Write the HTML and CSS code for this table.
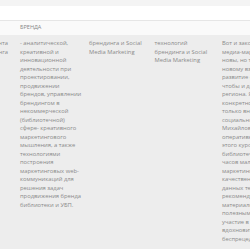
FILE: index.html
```html
<!DOCTYPE html>
<html lang="ru">
<head>
<meta charset="utf-8">
<link rel="stylesheet" href="styles.css">
</head>
<body>
<div class="page">
  <div class="prev-row"></div>
  <div class="head-top"></div>
  <table class="grid">
    <colgroup>
      <col class="c1"><col class="c2"><col class="c3"><col class="c4"><col class="c5">
    </colgroup>
    <thead>
      <tr>
        <th></th>
        <th>БРЕНДА</th>
        <th></th>
        <th></th>
        <th></th>
      </tr>
    </thead>
    <tbody>
      <tr>
        <td class="first">менеджмента<br>брендинга</td>
        <td>- аналитической,<br>креативной и<br>инновационной<br>деятельности при<br>проектировании,<br>продвижении<br>брендов, управлении<br>брендингом в<br>некоммерческой<br>(библиотечной)<br>сфере- креативного<br>маркетингового<br>мышления, а также<br>технологиями<br>построения<br>маркетинговых web-<br>коммуникаций для<br>решения задач<br>продвижения бренда<br>библиотеки и УБП.</td>
        <td>брендинга и Social<br>Media Marketing</td>
        <td>технологий<br>брендинга и Social<br>Media Marketing</td>
        <td>Вот и закончился курс<br>медиа-маркетинга. Многие темы<br>новы, но теперь я по-<br>новому взглянула на<br>развитие своей библиотеки,<br>чтобы и дальше быть центром<br>региона. Я получила<br>конкретное понимание, что не<br>только внешний вид, но и<br>социальные сети важны.<br>Михайловой Г.В. спасибо за<br>оперативность. Для меня<br>этого курса было достаточно:<br>библиотечному специалисту<br>часов мало, но теперь<br>маркетинг стал понятнее,<br>качественно, без лишних<br>данных техник. Всем<br>рекомендую! Все<br>материалы курса были<br>полезным и доступным.<br>участие в семинаре<br>вдохновит вас на<br>беспрецедентные</td>
      </tr>
    </tbody>
  </table>
</div>
</body>
</html>
```
FILE: styles.css
```css
html, body {
  margin: 0;
  padding: 0;
  background: #ffffff;
  overflow: hidden;
}
.page {
  width: 250px;
  height: 250px;
  overflow: hidden;
  font-family: "Open Sans", "Noto Sans", sans-serif;
  color: #8a8a8a;
}
.prev-row {
  height: 6px;
  background: #f4f4f4;
}
.head-top {
  height: 14px;
  background: #ffffff;
  border-bottom: 1px solid #e6e6e6;
}
.grid {
  border-collapse: collapse;
  table-layout: fixed;
  width: 374px;
  margin-left: -60px;
}
.c1 { width: 74px; }
.c2 { width: 69px; }
.c3 { width: 65.5px; }
.c4 { width: 67.5px; }
.c5 { width: 98px; }
.grid thead tr {
  height: 14px;
}
.grid th {
  box-sizing: border-box;
  height: 14px;
  padding: 0 6px 2px;
  background: #fafafa;
  font-weight: normal;
  font-size: 5.6px;
  text-align: left;
  vertical-align: middle;
  line-height: 10px;
  color: #888888;
}
.grid td {
  background: #ededed;
  vertical-align: top;
  padding: 4px 6px 6px;
  font-size: 5.8px;
  line-height: 8.5px;
  white-space: nowrap;
  overflow: hidden;
}
.grid td.first {
  text-align: right;
}
```
